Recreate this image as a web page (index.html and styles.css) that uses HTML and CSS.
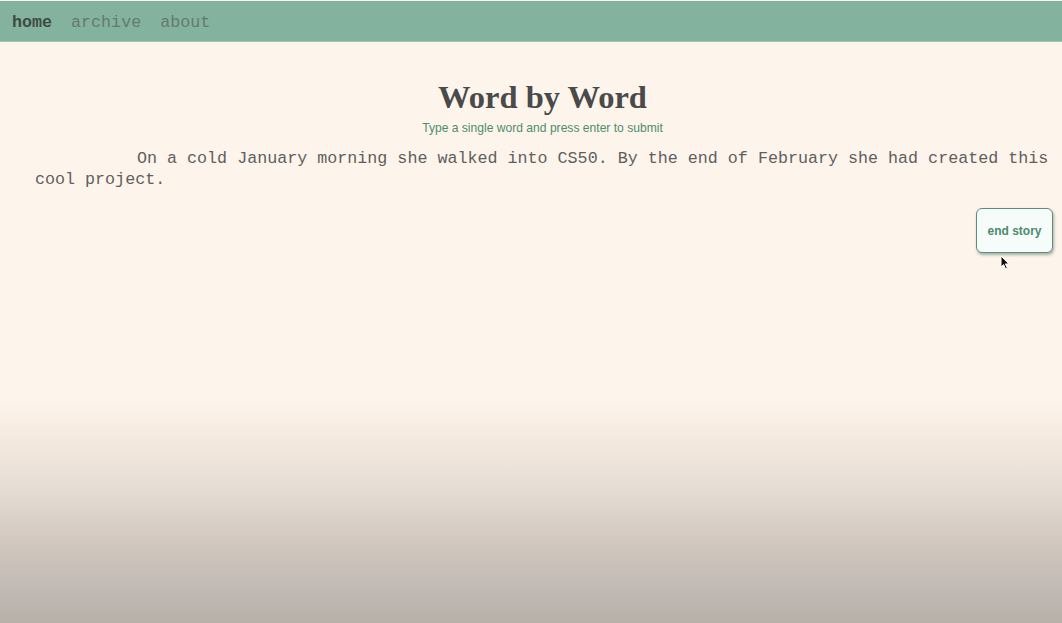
FILE: index.html
```html
<!DOCTYPE html>
<html lang="en">
<head>
<meta charset="utf-8">
<title>Word by Word</title>
<link rel="stylesheet" href="styles.css">
</head>
<body>
<nav class="nav">
  <a class="nav-link active" href="#">home</a>
  <a class="nav-link" href="#">archive</a>
  <a class="nav-link" href="#">about</a>
</nav>
<main class="main">
  <h1 class="title">Word by Word</h1>
  <p class="hint">Type a single word and press enter to submit</p>
  <p class="story">On a cold January morning she walked into CS50. By the end of February she had created this cool project.</p>
  <div class="actions">
    <button class="end-btn" type="button">end story</button>
    <svg class="cursor" width="12" height="16" viewBox="0 0 12 16"><path d="M1 1 L1 12 L3.6 9.6 L5.6 14 L7.4 13.2 L5.4 8.9 L9 8.9 Z" fill="#111" stroke="#fff" stroke-width="1"/></svg>
  </div>
</main>
<div class="shade"></div>
</body>
</html>
```
FILE: styles.css
```css
html, body {
  margin: 0;
  padding: 0;
}
body {
  background: #fdf4eb;
  min-height: 623px;
  font-family: "Liberation Mono", "Courier New", monospace;
  position: relative;
  overflow: hidden;
}
.nav {
  margin-top: 1px;
  height: 41px;
  background: #83b39e;
  border-bottom: 1px solid #9cc4b1;
  display: flex;
  align-items: center;
  gap: 19px;
  padding-left: 12px;
  padding-top: 4px;
  box-sizing: border-box;
}
.nav-link {
  font-family: "Liberation Mono", "Courier New", monospace;
  font-size: 16.7px;
  color: #647a70;
  text-decoration: none;
  line-height: 1;
}
.nav-link.active {
  color: #3f4a45;
  font-weight: bold;
}
.main {
  padding: 0 12px 0 35px;
  position: relative;
}
.title {
  font-family: "Liberation Serif", "Times New Roman", serif;
  font-weight: bold;
  font-size: 32.5px;
  color: #4a4a4a;
  text-align: center;
  margin: 37px 0 0 0;
  line-height: 36px;
}
.hint {
  font-family: "Liberation Sans", Arial, sans-serif;
  font-size: 12.1px;
  color: #4f8d70;
  text-align: center;
  margin: 6px 0 0 0;
  line-height: 15px;
}
.story {
  font-size: 16.7px;
  line-height: 21px;
  color: #5f5f5f;
  text-indent: 102px;
  margin: 12px 0 0 0;
}
.actions {
  display: flex;
  justify-content: flex-end;
  margin-top: 18px;
  position: relative;
}
.end-btn {
  width: 77px;
  height: 45px;
  background: #f6fcf9;
  border: 1.5px solid #5f8c7a;
  border-radius: 6px;
  box-shadow: 1px 2px 3px rgba(60, 90, 75, 0.45);
  font-family: "Liberation Sans", Arial, sans-serif;
  font-weight: bold;
  font-size: 12px;
  color: #4d8a70;
  padding: 0;
  margin-right: -3px;
  cursor: pointer;
}
.cursor {
  position: absolute;
  right: 38px;
  top: 47px;
}
.shade {
  position: absolute;
  left: 0;
  right: 0;
  top: 400px;
  height: 223px;
  background: linear-gradient(to bottom,
    rgba(253, 244, 235, 0) 0%,
    #f4e9df 18%,
    #e5ddd4 40%,
    #d3c9c0 62%,
    #c3bbb5 82%,
    #b7b1aa 100%);
  pointer-events: none;
}
```
